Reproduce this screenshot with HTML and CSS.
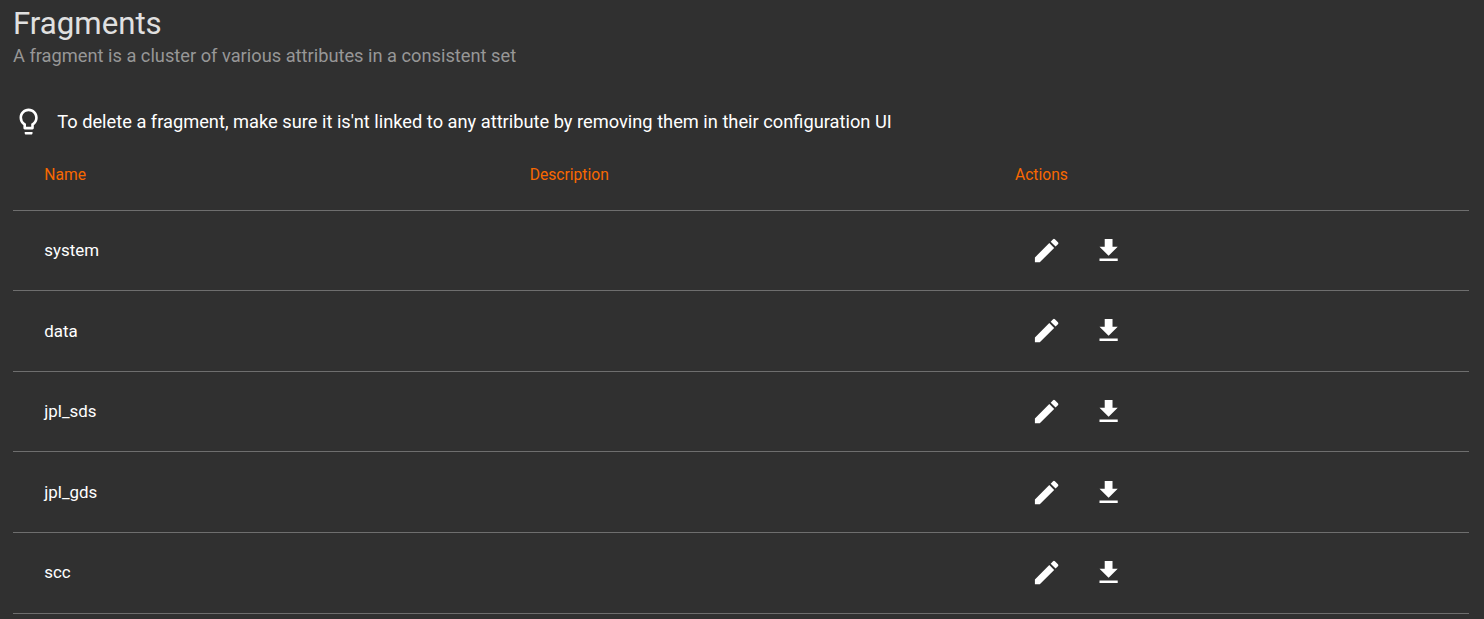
FILE: index.html
```html
<!DOCTYPE html>
<html lang="en">
<head>
<meta charset="utf-8">
<title>Fragments</title>
<link rel="stylesheet" href="styles.css">
</head>
<body>
<svg class="defs" aria-hidden="true">
<symbol id="bulb" viewBox="0 0 24.6 24.6"><path d="M9 21c0 .55.45 1 1 1h4c.55 0 1-.45 1-1v-1H9v1zm3-19C8.14 2 5 5.14 5 9c0 2.38 1.19 4.47 3 5.74V17c0 .55.45 1 1 1h6c.55 0 1-.45 1-1v-2.26c1.81-1.27 3-3.36 3-5.74 0-3.86-3.14-7-7-7zm2.85 11.1l-.85.6V16h-4v-2.3l-.85-.6A4.997 4.997 0 0 1 7 9c0-2.76 2.24-5 5-5s5 2.24 5 5c0 1.63-.8 3.16-2.15 4.1z"/></symbol>
<symbol id="edit" viewBox="0 0 24.6 24.6"><path d="M3 17.25V21h3.75L17.81 9.94l-3.75-3.75L3 17.25zM20.71 7.04a.996.996 0 0 0 0-1.41l-2.34-2.34a.996.996 0 0 0-1.41 0l-1.83 1.83 3.75 3.75 1.83-1.83z"/></symbol>
<symbol id="download" viewBox="0 0 24.6 24.6"><path d="M19 9h-4V3H9v6H5l7 7 7-7zM5 18v2h14v-2H5z"/></symbol>
</svg>
<main class="page">
<h1 class="title">Fragments</h1>
<p class="subtitle">A fragment is a cluster of various attributes in a consistent set</p>
<div class="hint"><svg class="icon"><use href="#bulb"/></svg><span class="hint-text">To delete a fragment, make sure it is'nt linked to any attribute by removing them in their configuration UI</span></div>
<div class="table">
<div class="row head"><span>Name</span><span>Description</span><span>Actions</span></div>
<div class="row"><span class="name">system</span><span></span><div class="actions"><svg class="icon"><use href="#edit"/></svg><svg class="icon"><use href="#download"/></svg></div></div>
<div class="row"><span class="name">data</span><span></span><div class="actions"><svg class="icon"><use href="#edit"/></svg><svg class="icon"><use href="#download"/></svg></div></div>
<div class="row"><span class="name">jpl_sds</span><span></span><div class="actions"><svg class="icon"><use href="#edit"/></svg><svg class="icon"><use href="#download"/></svg></div></div>
<div class="row"><span class="name">jpl_gds</span><span></span><div class="actions"><svg class="icon"><use href="#edit"/></svg><svg class="icon"><use href="#download"/></svg></div></div>
<div class="row"><span class="name">scc</span><span></span><div class="actions"><svg class="icon"><use href="#edit"/></svg><svg class="icon"><use href="#download"/></svg></div></div>
</div>
</main>
</body>
</html>
```
FILE: styles.css
```css
* { box-sizing: border-box; }
body { margin: 0; background: #303030; color: #fff; font-family: Roboto, sans-serif; height: 619px; overflow: hidden; }
.defs { display: none; }
.page { padding: 5px 15px 0 13px; }
.title { margin: 0; font-size: 31.2px; font-weight: 400; line-height: 37px; color: #e0e0e0; }
.subtitle { margin: 3px 0 0; font-size: 18.25px; line-height: 22px; color: #979797; }
.hint { display: flex; align-items: center; height: 32px; margin-top: 38.6px; gap: 12.2px; }
.hint-text { font-size: 18.25px; line-height: 22px; padding-top: 0.6px; }
.icon { width: 32px; height: 32px; fill: #fff; display: block; flex: none; }
.table { display: flex; flex-direction: column; }
.row { display: grid; grid-template-columns: repeat(3, 485.33px); align-items: center; padding-left: 31.3px; height: 80.6px; border-bottom: 1px solid #6e6e6e; font-size: 16.9px; }
.head { height: 73px; padding-top: 1px; color: #f86800; font-size: 15.65px; }
.name { line-height: 20px; padding-bottom: 0.8px; }
.actions { display: flex; padding: 0.8px 0 0 16px; gap: 30px; }
```
